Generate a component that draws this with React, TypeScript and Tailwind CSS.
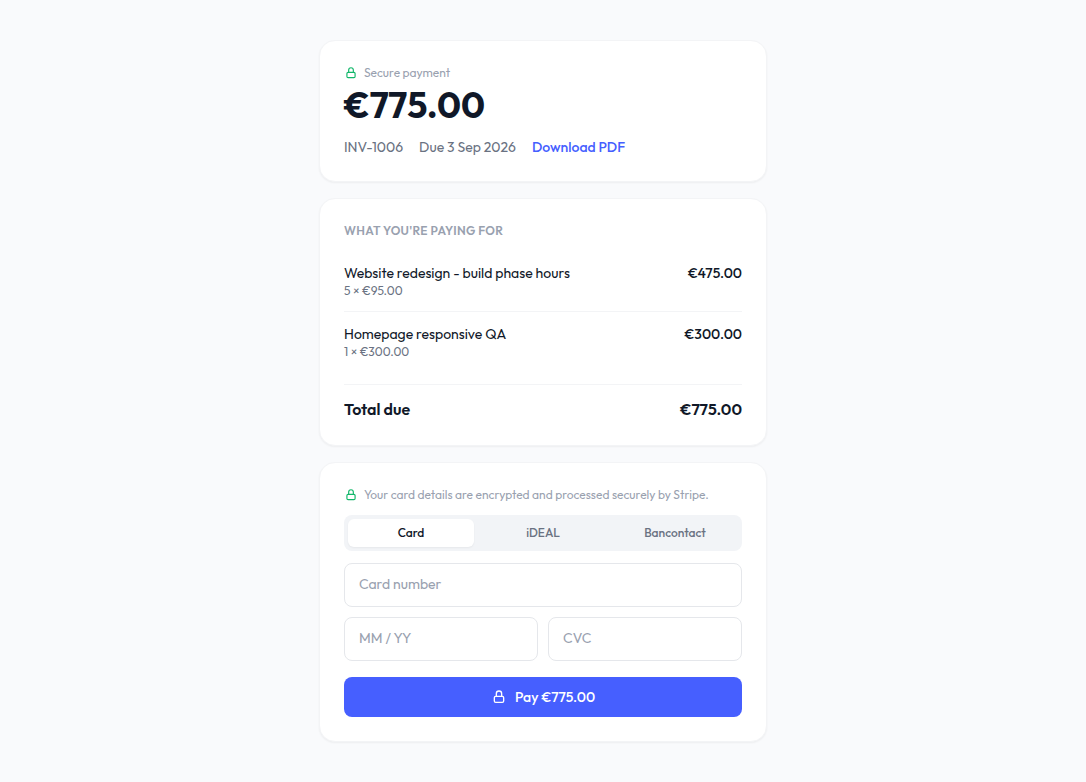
import { useState } from 'react';

interface LineItem {
  id: number;
  name: string;
  detail: string;
  amount: string;
}

const ITEMS: LineItem[] = [
  { id: 1, name: 'Website redesign - build phase hours', detail: '5 × €95.00', amount: '€475.00' },
  { id: 2, name: 'Homepage responsive QA', detail: '1 × €300.00', amount: '€300.00' },
];

const METHODS = ['Card', 'iDEAL', 'Bancontact'];

const CARD = 'rounded-2xl border border-gray-100 bg-white p-6 shadow-xs';
const FIELD =
  'h-11 w-full min-w-0 rounded-lg border border-gray-200 bg-white px-3.5 pb-0.5 text-sm text-gray-900 placeholder:text-gray-400 focus:outline-2 focus:outline-[#465fff]';

function LockIcon({ className }: { className: string }) {
  return (
    <svg
      className={className}
      viewBox="0 0 24 24"
      fill="none"
      stroke="currentColor"
      strokeWidth="2"
      strokeLinecap="round"
      strokeLinejoin="round"
      aria-hidden="true"
    >
      <rect x="5" y="11" width="14" height="9" rx="2" />
      <path d="M8 11V7a4 4 0 0 1 8 0v4" />
    </svg>
  );
}

function SecureNote({ text }: { text: string }) {
  return (
    <p className="flex items-center gap-1.5 text-xs text-gray-400">
      <LockIcon className="size-3.5 shrink-0 text-[#12b76a]" />
      {text}
    </p>
  );
}

export default function App() {
  const [method, setMethod] = useState('Card');

  return (
    <main className="min-h-screen bg-[#f9fafc] px-4 py-10 font-['Outfit','Lato',sans-serif]">
      <div className="mx-auto flex max-w-md flex-col gap-4">
        <section className={CARD}>
          <SecureNote text="Secure payment" />
          <h1 className="mt-1 text-4xl font-bold text-[#101828]">€775.00</h1>
          <div className="mt-3 flex flex-wrap items-center gap-x-4 text-sm text-gray-500">
            <span>INV-1006</span>
            <span>Due 3 Sep 2026</span>
            <a href="#pdf" className="font-medium text-[#465fff] hover:underline">
              Download PDF
            </a>
          </div>
        </section>

        <section className={CARD}>
          <h2 className="mb-3 text-xs font-semibold tracking-wide text-gray-400 uppercase">What you're paying for</h2>
          <ul className="divide-y divide-gray-100">
            {ITEMS.map((item) => (
              <li key={item.id} className="flex items-start justify-between gap-4 py-3">
                <div>
                  <p className="text-sm text-[#101828]">{item.name}</p>
                  <p className="text-xs text-gray-500">{item.detail}</p>
                </div>
                <span className="text-sm font-medium text-[#101828]">{item.amount}</span>
              </li>
            ))}
          </ul>
          <div className="mt-3 flex justify-between border-t border-gray-100 pt-3 text-base font-semibold text-[#101828]">
            <span>Total due</span>
            <span>€775.00</span>
          </div>
        </section>

        <section className={CARD}>
          <SecureNote text="Your card details are encrypted and processed securely by Stripe." />

          <div className="mt-3 grid grid-cols-3 gap-1.5 rounded-lg bg-[#f2f4f7] p-1">
            {METHODS.map((m) => (
              <button
                key={m}
                type="button"
                aria-pressed={m === method}
                onClick={() => setMethod(m)}
                className={`rounded-md py-1.5 text-xs font-medium ${
                  m === method ? 'bg-white text-[#101828] shadow-xs' : 'text-gray-500'
                }`}
              >
                {m}
              </button>
            ))}
          </div>

          <form onSubmit={(e) => e.preventDefault()}>
            <div className="mt-3 grid grid-cols-2 gap-2.5">
              <div className="col-span-2">
                <input className={FIELD} aria-label="Card number" placeholder="Card number" inputMode="numeric" />
              </div>
              <input className={FIELD} aria-label="Expiry date" placeholder="MM / YY" />
              <input className={FIELD} aria-label="CVC" placeholder="CVC" inputMode="numeric" />
            </div>
            <button
              type="submit"
              className="mt-4 flex h-10 w-full items-center justify-center gap-2 rounded-lg bg-[#465fff] text-sm font-medium text-white hover:bg-[#3641f5]"
            >
              <LockIcon className="size-4" />
              Pay €775.00
            </button>
          </form>
        </section>
      </div>
    </main>
  );
}
